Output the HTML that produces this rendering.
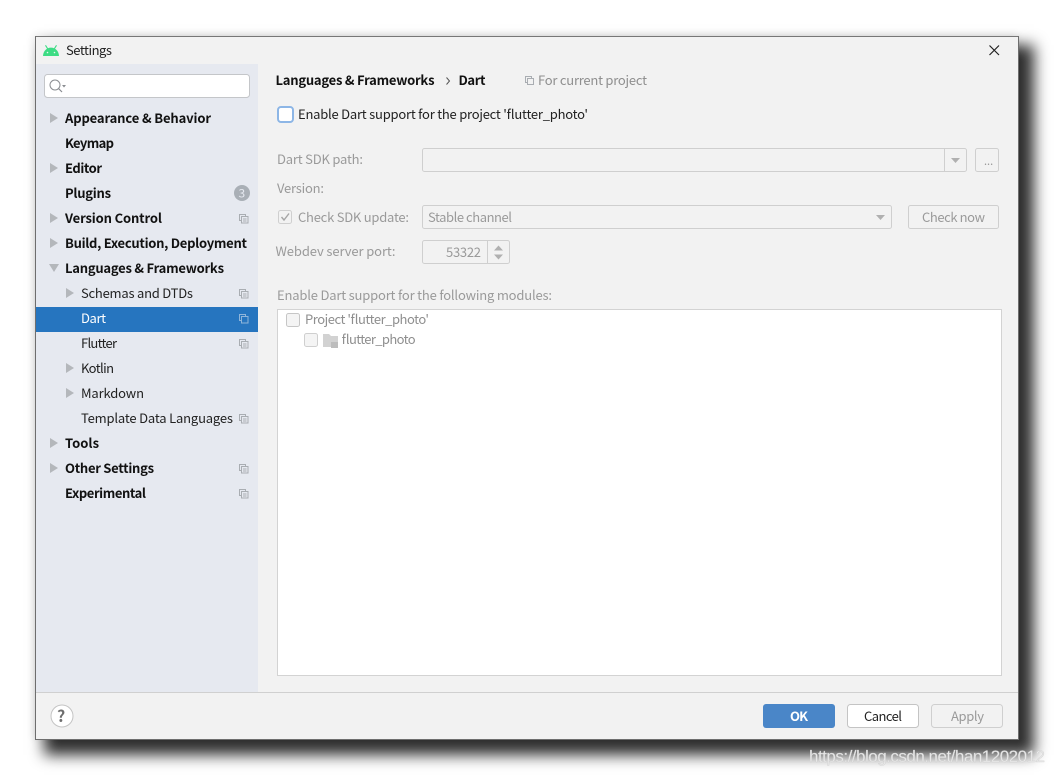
<!DOCTYPE html>
<html><head><meta charset="utf-8"><style>
html,body{margin:0;padding:0;background:#fff;width:1054px;height:775px;overflow:hidden}
#d{position:absolute;left:35px;top:36px;width:982px;height:702px;background:#f2f2f2;border:1px solid #6e6e6e;border-top-color:#777;box-shadow:12px 12px 14px 3px rgba(0,0,0,.82),-2px -2px 8px rgba(0,0,0,.07)}
svg{position:absolute;left:0;top:0;filter:blur(.25px)}
text{font-size:13px;font-family:"Noto Sans CJK SC","Liberation Sans",sans-serif;fill:#222}
.b{font-weight:700;fill:#111}
.g{fill:#9a9a9a}
.l{fill:#8f8f8f}
.bx{fill:#f2f2f2;stroke:#cfcfcf;stroke-width:1}
.ar{fill:#b4b7bb}
</style></head><body>
<div id="d"></div>
<svg width="1054" height="775" viewBox="0 0 1054 775">
<defs><g id="cp"><rect x="0.5" y="0.5" width="6" height="6" fill="none" stroke="#a9adb2"/><rect x="2.5" y="2.5" width="6.5" height="6.5" fill="#e6e9f0" stroke="#a9adb2"/><path d="M4 5h3.5M4 7h3.5" stroke="#a9adb2"/></g></defs>
<!-- title -->
<path d="M43 56c.2-5 3.600-8.400 8-8.400s7.800 3.400 8 8.400z" fill="#3ddc84"/>
<path d="M45.500 45.300l2.500 4M56.500 45.300l-2.500 4" stroke="#3ddc84" stroke-width="1.100"/>
<circle cx="47.500" cy="52.500" r=".8" fill="#e8f8ee"/><circle cx="54.500" cy="52.500" r=".8" fill="#e8f8ee"/>
<text x="66" y="55" textLength="46">Settings</text>
<path d="M989.500 45.500l9.500 9.500M999 45.500l-9.500 9.500" stroke="#222" stroke-width="1.200" fill="none"/>
<!-- sidebar -->
<rect x="36" y="64" width="222" height="628" fill="#e6e9f0"/>
<rect x="44.500" y="74.500" width="205" height="23" rx="3" fill="#fff" stroke="#c4c6c9"/>
<circle cx="55" cy="85" r="5" fill="none" stroke="#8a8d91"/><path d="M58.500 88.500l3.500 3.500" stroke="#8a8d91" stroke-width="1.200"/><path d="M62 85h4l-2 2.500z" fill="#8a8d91"/>
<path class="ar" d="M50 113v10l8-5z"/>
<text class="b" x="65" y="123" textLength="146">Appearance &amp; Behavior</text>
<text class="b" x="65" y="148" textLength="49">Keymap</text>
<path class="ar" d="M50 163v10l8-5z"/>
<text class="b" x="65" y="173" textLength="37">Editor</text>
<text class="b" x="65" y="198" textLength="46">Plugins</text>
<circle cx="242" cy="193" r="8" fill="#a9afb6"/><text x="238.500" y="197.500" style="font-size:12px;fill:#e6e9f0">3</text>
<path class="ar" d="M50 213v10l8-5z"/>
<text class="b" x="65" y="223" textLength="97">Version Control</text>
<use href="#cp" x="239" y="214"/>
<path class="ar" d="M50 238v10l8-5z"/>
<text class="b" x="65" y="248" textLength="182">Build, Execution, Deployment</text>
<path class="ar" d="M49 264h10l-5 8z"/>
<text class="b" x="65" y="273" textLength="159">Languages &amp; Frameworks</text>
<path class="ar" d="M66 288v10l8-5z"/>
<text x="81" y="298" textLength="112">Schemas and DTDs</text>
<use href="#cp" x="239" y="289"/>
<rect x="36" y="307" width="222" height="25" fill="#2675bf"/>
<text x="81" y="323" textLength="25" style="fill:#fff">Dart</text>
<rect x="239.500" y="314.500" width="6" height="6" fill="none" stroke="#8fb5da"/><rect x="241.500" y="316.500" width="6.500" height="6.500" fill="#2675bf" stroke="#8fb5da"/>
<text x="81" y="348" textLength="36">Flutter</text>
<use href="#cp" x="239" y="339"/>
<path class="ar" d="M66 363v10l8-5z"/>
<text x="81" y="373" textLength="33">Kotlin</text>
<path class="ar" d="M66 388v10l8-5z"/>
<text x="81" y="398" textLength="63">Markdown</text>
<text x="81" y="423" textLength="152">Template Data Languages</text>
<use href="#cp" x="239" y="414"/>
<path class="ar" d="M50 438v10l8-5z"/>
<text class="b" x="65" y="448" textLength="34">Tools</text>
<path class="ar" d="M50 463v10l8-5z"/>
<text class="b" x="65" y="473" textLength="89">Other Settings</text>
<use href="#cp" x="239" y="464"/>
<text class="b" x="65" y="498" textLength="81">Experimental</text>
<use href="#cp" x="239" y="489"/>
<!-- header -->
<text class="b" x="275.500" y="85" textLength="159">Languages &amp; Frameworks</text>
<path d="M446.500 77.500l3 3.500-3 3.500" fill="none" stroke="#555" stroke-width="1"/>
<text class="b" x="458.500" y="85" textLength="27">Dart</text>
<rect x="525.500" y="76.500" width="6" height="6" fill="none" stroke="#a9adb2"/><rect x="527.500" y="78.500" width="6" height="6" fill="#f2f2f2" stroke="#a9adb2"/>
<text class="l" x="538" y="85" textLength="109">For current project</text>
<!-- enable -->
<rect x="278" y="107" width="15" height="15" rx="3" fill="#fff" stroke="#8db6e6" stroke-width="2"/>
<text x="298" y="119" textLength="290">Enable Dart support for the project 'flutter_photo'</text>
<!-- SDK -->
<text class="g" x="277" y="164" textLength="86">Dart SDK path:</text>
<rect x="422.500" y="148.500" width="544" height="23" rx="2" class="bx"/>
<path d="M944.500 149v22" stroke="#cfcfcf"/>
<path d="M951 158h9l-4.500 5z" fill="#b0b0b0"/>
<rect x="975.500" y="148.500" width="23" height="23" rx="2" class="bx"/>
<text class="g" x="984" y="165" style="font-size:11px">...</text>
<text class="g" x="277" y="193" textLength="47">Version:</text>
<rect x="278.500" y="210.500" width="13" height="13" rx="2" class="bx"/>
<path d="M281.500 217l2.500 3 5-6.500" fill="none" stroke="#a5a5a5" stroke-width="1.400"/>
<text class="g" x="298" y="222" textLength="111">Check SDK update:</text>
<rect x="422.500" y="205.500" width="469" height="23" rx="2" class="bx"/>
<text class="g" x="428" y="222" textLength="84">Stable channel</text>
<path d="M876 215h9l-4.500 5z" fill="#b0b0b0"/>
<rect x="908.500" y="205.500" width="90" height="23" rx="2" class="bx"/>
<text class="g" x="922" y="222" textLength="63">Check now</text>
<text class="g" x="275.500" y="256" textLength="120">Webdev server port:</text>
<rect x="422.500" y="240.500" width="87" height="23" rx="2" class="bx"/>
<path d="M487.500 241v22" stroke="#cfcfcf"/>
<text class="g" x="446" y="257" textLength="35">53322</text>
<path d="M494 250.500l4.500-5 4.500 5zM494 254.500l4.500 5 4.500-5z" fill="#b0b0b0"/>
<!-- modules -->
<text class="g" x="277" y="300" textLength="275">Enable Dart support for the following modules:</text>
<rect x="277.500" y="309.500" width="724" height="366" fill="#fff" stroke="#d3d3d3"/>
<rect x="286.500" y="313.500" width="13" height="13" rx="2" fill="#f4f4f4" stroke="#c6c6c6"/>
<text class="l" x="305" y="324" textLength="124">Project 'flutter_photo'</text>
<rect x="304.500" y="333.500" width="13" height="13" rx="2" fill="#f4f4f4" stroke="#cfcfcf"/>
<path d="M323 334h6l2 2h7v11h-15z" fill="#d2d2d2"/><rect x="331" y="342" width="7" height="6" fill="#bdbdbd"/>
<text class="l" x="341" y="344" textLength="74">flutter_photo</text>
<!-- footer -->
<path d="M36 692.500h982" stroke="#d0d0d0"/>
<circle cx="62" cy="716" r="11" fill="#fff" stroke="#c4c4c4"/>
<text x="57" y="722" style="font-size:16px;font-weight:700;fill:#6e6e6e">?</text>
<rect x="763" y="704" width="72" height="24" rx="3" fill="#4a86c8"/>
<text x="790" y="721" textLength="18" style="font-weight:700;fill:#fff">OK</text>
<rect x="847.500" y="704.500" width="71" height="23" rx="3" fill="#fff" stroke="#c4c4c4"/>
<text x="864" y="721" textLength="38">Cancel</text>
<rect x="931.500" y="704.500" width="71" height="23" rx="3" class="bx"/>
<text class="g" x="951" y="721" textLength="33">Apply</text>
<text x="809" y="762" textLength="236" style='font-family:"Liberation Sans",sans-serif;font-size:17px;fill:#e8e8e8;stroke:#c8c8c8;stroke-width:.3'>https://blog.csdn.net/han1202012</text>
</svg>
</body></html>
